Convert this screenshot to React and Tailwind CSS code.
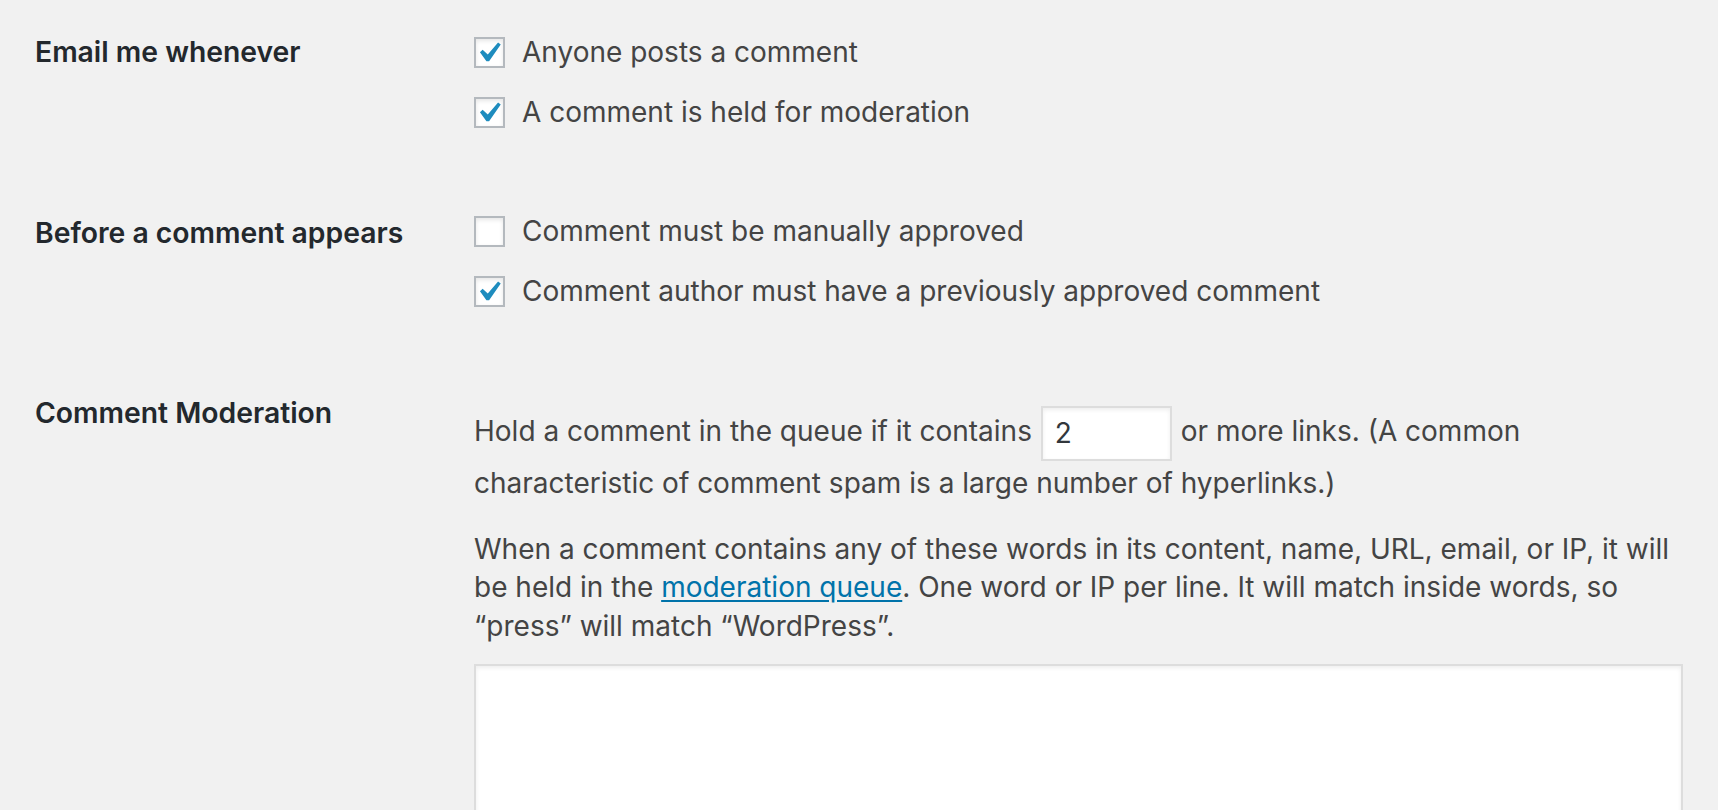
import React from "react";

function Check({ checked }) {
  return (
    <div className="relative w-[31px] h-[31px] shrink-0 border-2 border-[#b4b9be] bg-white shadow-[inset_0_2px_4px_rgba(0,0,0,0.1)]">
      {checked && (
        <svg
          viewBox="2.8 2.1 15.5 15.5"
          className="absolute -left-[2px] -top-[2px] w-[31px] h-[31px]"
        >
          <path
            d="M14.83 4.89l1.34.94-5.81 8.38H9.02L5.78 9.67l1.34-1.25 2.57 2.4z"
            fill="#1e8cbe"
          />
        </svg>
      )}
    </div>
  );
}

function Option({ checked, children }) {
  return (
    <label className="flex items-center gap-[17px] h-[60px]">
      <Check checked={checked} />
      <span>{children}</span>
    </label>
  );
}

export default function App() {
  return (
    <div className="min-h-screen bg-[#f1f1f1] font-['Inter',sans-serif] text-[28px] text-[#444] pt-[22px] px-[35px] overflow-hidden">
      {/* Email me whenever */}
      <div className="flex">
        <div className="w-[439px] shrink-0 leading-[60px] text-[28.3px] font-semibold text-[#23282d]">
          Email me whenever
        </div>
        <div>
          <Option checked>Anyone posts a comment</Option>
          <Option checked>A comment is held for moderation</Option>
        </div>
      </div>

      {/* Before a comment appears */}
      <div className="flex mt-[59px]">
        <div className="w-[439px] shrink-0 pt-[2px] leading-[60px] text-[28.3px] font-semibold text-[#23282d]">
          Before a comment appears
        </div>
        <div>
          <Option>Comment must be manually approved</Option>
          <Option checked>Comment author must have a previously approved comment</Option>
        </div>
      </div>

      {/* Comment Moderation */}
      <div className="flex mt-[64px]">
        <div className="w-[439px] shrink-0 leading-[56px] text-[28.3px] font-semibold text-[#23282d]">
          Comment Moderation
        </div>
        <div className="flex-1 pt-[21px]">
          <p className="leading-[50px]">
            Hold a comment in the queue if it contains{" "}
            <span className="inline-block align-middle -my-[3px] mx-[1px] w-[131px] h-[55px] border-2 border-[#ddd] bg-white shadow-[inset_0_2px_4px_rgba(0,0,0,0.07)] px-[12px] leading-[51px] text-[#32373c]">
              2
            </span>{" "}
            or more links. (A common characteristic of comment spam is a large number of hyperlinks.)
          </p>
          <p className="mt-[22px] leading-[38.5px]">
            When a comment contains any of these words in its content, name, URL, email, or IP, it will be held in the{" "}
            <a href="#" className="text-[#0073aa] underline underline-offset-[3px]">
              moderation queue
            </a>
            . One word or IP per line. It will match inside words, so “press” will match “WordPress”.
          </p>
          <div className="mt-[19px] h-[220px] border-2 border-[#ddd] bg-white shadow-[inset_0_2px_4px_rgba(0,0,0,0.07)]" />
        </div>
      </div>
    </div>
  );
}
